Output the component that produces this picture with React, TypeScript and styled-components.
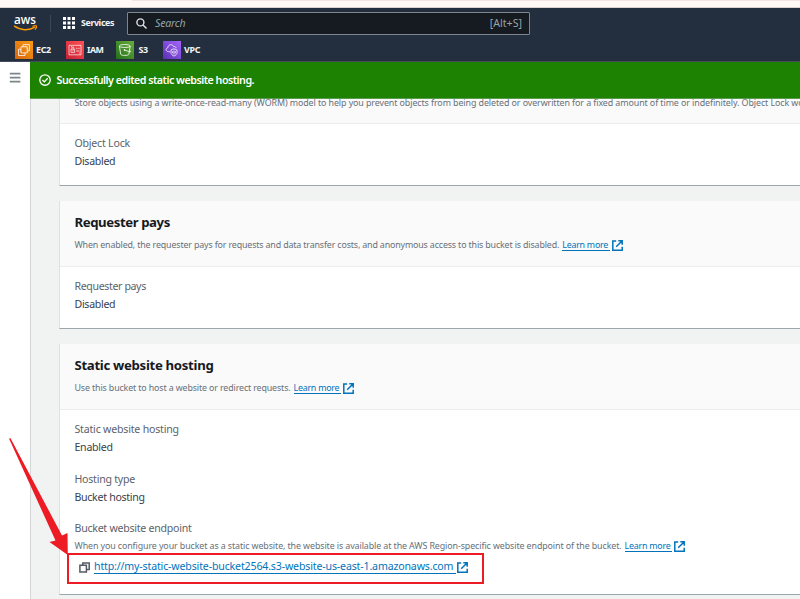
import React from 'react';
import styled, { createGlobalStyle } from 'styled-components';

const GlobalStyle = createGlobalStyle`
  * { box-sizing: border-box; }
  body { margin: 0; background: #fff; overflow: hidden; font-family: "Noto Sans", "Open Sans", sans-serif; }
  svg { display: block; flex: none; overflow: visible; }
`;

const Page = styled.div`
  position: relative;
  display: flex;
  flex-direction: column;
  width: 800px;
  height: 599px;
  overflow: hidden;
`;

const BrowserStrip = styled.div`
  flex: none;
  height: 8px;
  padding-left: 132px;
  background: #fff8f5;
  border-bottom: 1px solid #d9d2d1;
`;

const BrowserTab = styled.div`
  height: 1px;
  background: #f3e3e2;
`;

const Nav = styled.header`
  flex: none;
  height: 54px;
  background: #232f3e;
  border-bottom: 1px solid #414d5c;
  color: #fff;
`;

const NavTop = styled.div`
  display: flex;
  align-items: center;
  height: 30px;
  padding-left: 14px;
`;

const NavDivider = styled.div`
  width: 1px;
  height: 17px;
  margin: 0 12px 0 12px;
  background: #3d4652;
`;

const NavText = styled.span<{ $ls: number }>`
  font-size: 8.9px;
  font-weight: 700;
  line-height: 12px;
  color: #f3f4f5;
  white-space: nowrap;
  letter-spacing: ${(p) => p.$ls}px;
`;

const ServicesButton = styled.div`
  display: flex;
  align-items: center;
  gap: 6px;
  width: 64px;
`;

const SearchBox = styled.div`
  display: flex;
  align-items: center;
  width: 403px;
  height: 23px;
  padding: 0 7px 0 8px;
  background: #161a21;
  border: 1px solid #7e868d;
  border-radius: 1px;
  font-size: 10.6px;
  color: #95a5a6;
`;

const Placeholder = styled.span`
  flex: 1;
  margin-left: 8px;
  font-style: italic;
  letter-spacing: -0.2px;
`;

const Favorites = styled.div`
  display: flex;
  height: 23px;
  padding: 3px 0 0 15px;
`;

const Favorite = styled.div<{ $w: number; $gap?: number }>`
  display: flex;
  align-items: center;
  gap: ${(p) => p.$gap ?? 3}px;
  width: ${(p) => p.$w}px;
  height: 18px;
`;

const ServiceIcon = styled.span<{ $from: string; $to: string }>`
  display: flex;
  align-items: center;
  justify-content: center;
  width: 18px;
  height: 18px;
  background: linear-gradient(45deg, ${(p) => p.$from}, ${(p) => p.$to});
`;

const Body = styled.div`
  display: flex;
  flex: 1;
  min-height: 0;
`;

const Rail = styled.aside`
  width: 30px;
  padding: 10px 0 0 9px;
  background: #fff;
`;

const Main = styled.main`
  display: flex;
  flex-direction: column;
  flex: 1;
  min-width: 0;
`;

const Flash = styled.div`
  display: flex;
  align-items: center;
  flex: none;
  gap: 6px;
  height: 37px;
  padding: 0 0 1px 8.5px;
  background: #1d8102;
  border-bottom: 1px solid #5c9a4c;
  color: #fff;
  font-size: 10.7px;
  font-weight: 600;
  letter-spacing: -0.5px;
  white-space: nowrap;
`;

const Content = styled.div`
  display: flex;
  flex-direction: column;
  flex: 1;
  gap: 15px;
  min-height: 0;
  padding-left: 28px;
  overflow: hidden;
  background: #f1f3f3;
  border-left: 1px solid #d2d6d6;
`;

const Panel = styled.section<{ $h: number }>`
  flex: none;
  height: ${(p) => p.$h}px;
  background: #fff;
  border-left: 1px solid #dde1e1;
  border-bottom: 1px solid #9ba7ab;
`;

const PanelHeader = styled.div<{ $scrolled?: boolean }>`
  height: ${(p) => (p.$scrolled ? 25 : 66)}px;
  padding: ${(p) => (p.$scrolled ? 0 : 12)}px 0 0 14.5px;
  background: #fafafa;
  border-bottom: 1px solid #eaeded;
`;

const Title = styled.h2<{ $ls: number }>`
  height: 23px;
  margin: 0;
  font-size: 13.2px;
  font-weight: 700;
  line-height: 19px;
  color: #16191f;
  white-space: nowrap;
  letter-spacing: ${(p) => p.$ls}px;
`;

const Note = styled.div<{ $ls: number; $lift?: boolean }>`
  display: flex;
  height: 18px;
  transform: ${(p) => (p.$lift ? 'translateY(-5px)' : 'none')};
  font-size: 8.9px;
  line-height: 18px;
  color: #687078;
  white-space: nowrap;
  letter-spacing: ${(p) => p.$ls}px;
`;

const PanelBody = styled.div`
  display: flex;
  flex-direction: column;
  gap: 13.6px;
  padding: 10px 0 0 14.5px;
`;

const Field = styled.div`
  font-size: 10.6px;
  line-height: 18px;
  white-space: nowrap;
`;

const Label = styled.div<{ $ls: number }>`
  color: #5b626a;
  letter-spacing: ${(p) => p.$ls}px;
`;

const Value = styled.div<{ $ls: number }>`
  color: #38404a;
  letter-spacing: ${(p) => p.$ls}px;
`;

const LinkGroup = styled.a`
  display: flex;
  align-items: center;
  gap: 2px;
  height: 18px;
  margin-left: 3px;
  color: #0073bb;
`;

const LearnText = styled.span`
  width: 47.5px;
  height: 12px;
  line-height: 11px;
  letter-spacing: -0.24px;
  border-bottom: 1px solid #0073bb;
`;

const Endpoint = styled.div`
  display: flex;
  align-items: center;
  height: 20px;
  margin-top: 2px;
  padding-left: 4px;
  color: #0073bb;
`;

const EndpointText = styled.span`
  width: 361.5px;
  height: 14px;
  margin: 0 1px 0 4.5px;
  line-height: 12px;
  letter-spacing: -0.158px;
  border-bottom: 1px solid #0073bb;
`;

const Highlight = styled.div`
  position: absolute;
  left: 67px;
  top: 553px;
  width: 417px;
  height: 31px;
  border: 2px solid #ed1c24;
`;

const Pointer = styled.svg`
  position: absolute;
  left: 0;
  top: 430px;
`;

const ExternalIcon = () => (
  <svg width="11" height="11" viewBox="0 0 11 11" fill="none" stroke="#0073bb" strokeWidth="1.5">
    <path d="M4.2 .9H.8v9.3h9.4V6.8M6.3 .8h3.9v3.9M10 1 4.2 6.8" />
  </svg>
);

const CopyIcon = () => (
  <svg width="11" height="11" viewBox="0 0 11 11" fill="none" stroke="#545b64" strokeWidth="1.5">
    <path d="M3.8 3V.9h6.4v6.7H7.6M.9 3.2h6.5v6.7H.9z" />
  </svg>
);

const LearnMore = () => (
  <LinkGroup>
    <LearnText>Learn more</LearnText>
    <ExternalIcon />
  </LinkGroup>
);

const AwsLogo = () => (
  <svg width="24" height="17" viewBox="0 0 24 17">
    <text x="0" y="9.3" fontFamily="Open Sans, sans-serif" fontSize="12.2" fontWeight="600" fill="#fff" textLength="22" lengthAdjust="spacingAndGlyphs">aws</text>
    <path d="M.5 11.2c6 4.4 14.5 4.6 20.5 1" fill="none" stroke="#f90" strokeWidth="1.5" strokeLinecap="round" />
    <path d="M18.8 11.2c1.4-.5 3.4-.7 3.7-.2.3.6-.3 2.5-1.3 3.4" fill="none" stroke="#f90" strokeWidth="1.1" strokeLinecap="round" />
  </svg>
);

const GridIcon = () => (
  <svg width="12" height="12" viewBox="0 0 12 12" fill="#fff">
    {[0, 4.5, 9].map((y) => [0, 4.5, 9].map((x) => <rect key={`${x}-${y}`} x={x} y={y} width="3" height="3" />))}
  </svg>
);

const SearchIcon = () => (
  <svg width="11" height="11" viewBox="0 0 11 11" fill="none" stroke="#e4e6e8" strokeWidth="1.4">
    <circle cx="4.4" cy="4.4" r="3.5" />
    <path d="m7 7 3.5 3.5" />
  </svg>
);

const Ec2Icon = () => (
  <svg width="14" height="14" viewBox="0 0 14 14" fill="none" stroke="#fff" strokeOpacity=".85" strokeWidth=".9">
    <path d="M4 3.8h6.2v6.1H4zM8 9.9v2.6H1.5V6.2H4M6.2 3.8V1.6h6.2v6.2h-2.2M5.5 3.8v-1M8.5 3.8v-1M10.2 5.5h1M4 8H3" />
  </svg>
);

const IamIcon = () => (
  <svg width="14" height="14" viewBox="0 0 14 14" fill="none" stroke="#fff" strokeOpacity=".8" strokeWidth=".85">
    <path d="M1 2.3h12v9.5H1zM3 6.2h3.6v3.2H3zM3.8 6.2V5c0-1.5 2-1.5 2 0v1.2M4.8 7.3v1M8.2 5.4H9.5M10.3 5.4h1.2M8.2 8h3.3M3 3.6h1M11 10h1" />
  </svg>
);

const S3Icon = () => (
  <svg width="14" height="14" viewBox="0 0 14 14" fill="none" stroke="#fff" strokeOpacity=".85" strokeWidth=".95">
    <ellipse cx="6.8" cy="3" rx="5.4" ry="1.5" />
    <path d="m1.4 3 1.3 8.3c.7 1.5 7.5 1.5 8.2 0L12.2 3M6.5 7l5.2 1.8c1.3.3 1.2-.8-.2-1.5" />
    <circle cx="6.5" cy="7" r=".5" fill="#fff" />
  </svg>
);

const VpcIcon = () => (
  <svg width="14" height="14" viewBox="0 0 14 14" fill="none" stroke="#fff" strokeOpacity=".85" strokeWidth=".9">
    <path d="M5 8.7H3.5C.5 8.5.3 5.4 2.8 4.8 3 1.3 7.4.5 8.7 3.7c1.2-.6 2.2.2 2.3 1.3" />
    <path d="m9 5.8 3 1.1v2.8c0 1.5-1.3 2.6-3 3.4-1.7-.8-3-1.9-3-3.4V6.9zM9 7.5v4M7.6 8.2v2M10.4 8.2v2" />
  </svg>
);

const MenuIcon = () => (
  <svg width="12" height="12" viewBox="0 0 12 12" stroke="#7d8589" strokeWidth="1.7">
    <path d="M.8 1.7h10.6M.8 5.7h10.6M.8 9.7h10.6" />
  </svg>
);

const SuccessIcon = () => (
  <svg width="12" height="12" viewBox="0 0 12 12" fill="none" stroke="#fff" strokeWidth="1.35">
    <circle cx="6" cy="6" r="5.2" />
    <path d="m3.4 6 1.9 1.9 3.4-3.6" />
  </svg>
);

export default function App() {
  return (
    <Page>
      <GlobalStyle />
      <BrowserStrip><BrowserTab /></BrowserStrip>
      <Nav>
        <NavTop>
          <AwsLogo />
          <NavDivider />
          <ServicesButton>
            <GridIcon />
            <NavText $ls={-0.4}>Services</NavText>
          </ServicesButton>
          <SearchBox>
            <SearchIcon />
            <Placeholder>Search</Placeholder>
            <span>[Alt+S]</span>
          </SearchBox>
        </NavTop>
        <Favorites>
          <Favorite $w={51}>
            <ServiceIcon $from="#d4660c" $to="#fb9a14"><Ec2Icon /></ServiceIcon>
            <NavText $ls={-0.3}>EC2</NavText>
          </Favorite>
          <Favorite $w={50}>
            <ServiceIcon $from="#c81f35" $to="#ff5254"><IamIcon /></ServiceIcon>
            <NavText $ls={-0.5}>IAM</NavText>
          </Favorite>
          <Favorite $w={47} $gap={4.5}>
            <ServiceIcon $from="#23701b" $to="#68ad3b"><S3Icon /></ServiceIcon>
            <NavText $ls={-0.3}>S3</NavText>
          </Favorite>
          <Favorite $w={50}>
            <ServiceIcon $from="#5a30b5" $to="#a466fa"><VpcIcon /></ServiceIcon>
            <NavText $ls={-0.3}>VPC</NavText>
          </Favorite>
        </Favorites>
      </Nav>
      <Body>
        <Rail><MenuIcon /></Rail>
        <Main>
          <Flash><SuccessIcon />Successfully edited static website hosting.</Flash>
          <Content>
            <Panel $h={87}>
              <PanelHeader $scrolled>
                <Note $ls={-0.088} $lift>
                  Store objects using a write-once-read-many (WORM) model to help you prevent objects from being deleted or overwritten for a fixed amount of time or indefinitely. Object Lock works
                </Note>
              </PanelHeader>
              <PanelBody>
                <Field>
                  <Label $ls={-0.22}>Object Lock</Label>
                  <Value $ls={-0.3}>Disabled</Value>
                </Field>
              </PanelBody>
            </Panel>
            <Panel $h={128}>
              <PanelHeader>
                <Title $ls={-0.417}>Requester pays</Title>
                <Note $ls={-0.155}>
                  When enabled, the requester pays for requests and data transfer costs, and anonymous access to this bucket is disabled.
                  <LearnMore />
                </Note>
              </PanelHeader>
              <PanelBody>
                <Field>
                  <Label $ls={-0.37}>Requester pays</Label>
                  <Value $ls={-0.3}>Disabled</Value>
                </Field>
              </PanelBody>
            </Panel>
            <Panel $h={251}>
              <PanelHeader>
                <Title $ls={-0.317}>Static website hosting</Title>
                <Note $ls={-0.14}>
                  Use this bucket to host a website or redirect requests.
                  <LearnMore />
                </Note>
              </PanelHeader>
              <PanelBody>
                <Field>
                  <Label $ls={-0.2}>Static website hosting</Label>
                  <Value $ls={-0.28}>Enabled</Value>
                </Field>
                <Field>
                  <Label $ls={-0.24}>Hosting type</Label>
                  <Value $ls={-0.3}>Bucket hosting</Value>
                </Field>
                <Field>
                  <Label $ls={-0.26}>Bucket website endpoint</Label>
                  <Note $ls={-0.104}>
                    When you configure your bucket as a static website, the website is available at the AWS Region-specific website endpoint of the bucket.
                    <LearnMore />
                  </Note>
                  <Endpoint>
                    <CopyIcon />
                    <EndpointText>http://my-static-website-bucket2564.s3-website-us-east-1.amazonaws.com</EndpointText>
                    <ExternalIcon />
                  </Endpoint>
                </Field>
              </PanelBody>
            </Panel>
          </Content>
        </Main>
      </Body>
      <Highlight />
      <Pointer width="80" height="130" viewBox="0 0 80 130">
        <path d="M9 8.5 10.5 8.2 62 105.5 67.5 103 67.8 125 49.5 112 55.5 110.5Z" fill="#ed1c24" />
      </Pointer>
    </Page>
  );
}
